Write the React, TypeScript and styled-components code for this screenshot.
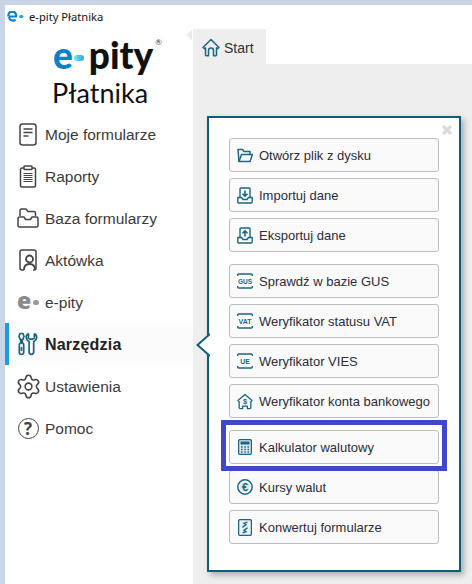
import React from "react";
import styled, { createGlobalStyle } from "styled-components";
import { Settings } from "lucide-react";

const GlobalStyle = createGlobalStyle`
  html, body {
    margin: 0;
    padding: 0;
    background: #c9d5e7;
  }
  * {
    box-sizing: border-box;
  }
`;

const Window = styled.div`
  width: 472px;
  height: 584px;
  padding: 5px 0 0 5px;
  overflow: hidden;
  font-family: "Liberation Sans", Arial, sans-serif;
`;

const Frame = styled.div`
  height: 579px;
  background: #fff;
  display: flex;
  flex-direction: column;
`;

const TitleBar = styled.div`
  height: 24px;
  flex: none;
  display: flex;
  align-items: center;
  gap: 5px;
  padding: 0 0 1px 2px;
  font-family: "Noto Sans", sans-serif;
  font-size: 11.2px;
  color: #111;
`;

const Body = styled.div`
  flex: 1;
  display: flex;
  min-height: 0;
`;

const Sidebar = styled.aside`
  width: 188px;
  flex: none;
  position: relative;
  display: flex;
  flex-direction: column;
`;

const CollapseMark = styled.div`
  position: absolute;
  right: 1px;
  top: 1px;
  width: 0;
  height: 0;
  border-top: 5px solid transparent;
  border-bottom: 5px solid transparent;
  border-right: 6px solid #eaeaea;
`;

const Logo = styled.div`
  height: 84px;
  display: flex;
  flex-direction: column;
  color: #111;
  font-family: Lato, sans-serif;
`;

const LogoTop = styled.div`
  height: 49px;
  display: flex;
  align-items: flex-start;
  padding: 6px 0 0 48px;
  font-size: 37px;
  font-weight: 900;
  line-height: 40px;
`;

const LogoE = styled.span`
  color: #0b82c4;
`;

const LogoDot = styled.span`
  width: 10px;
  height: 6px;
  margin: 20px 5px 0 1px;
  border-radius: 3px;
  background: linear-gradient(90deg, #8fdcf0, #2aa8dc);
`;

const LogoReg = styled.span`
  font-size: 8px;
  line-height: 10px;
  font-weight: 400;
  margin: 2px 0 0 2px;
  color: #333;
`;

const LogoName = styled.div`
  font-size: 27px;
  line-height: 30px;
  font-weight: 400;
  padding-left: 47px;
`;

const Nav = styled.nav`
  display: flex;
  flex-direction: column;
`;

const NavItem = styled.div<{ $active?: boolean }>`
  height: 42px;
  display: flex;
  align-items: center;
  padding-left: ${(p) => (p.$active ? "8px" : "12px")};
  border-left: ${(p) => (p.$active ? "4px solid #16a2d8" : "none")};
  background: ${(p) => (p.$active ? "#fbfbfb" : "transparent")};
  font-size: ${(p) => (p.$active ? "16px" : "15.5px")};
  letter-spacing: ${(p) => (p.$active ? "0.2px" : "0")};
  font-weight: ${(p) => (p.$active ? 700 : 400)};
  color: ${(p) => (p.$active ? "#222" : "#3a3a3a")};
`;

const NavIcon = styled.span`
  width: 22px;
  height: 24px;
  flex: none;
  margin-right: 6px;
  display: flex;
  align-items: center;
  justify-content: center;

  svg {
    flex: none;
  }
`;

const NavLabel = styled.span`
  margin-top: 1px;
`;

const GreyE = styled.span`
  font-family: "Open Sans", sans-serif;
  font-weight: 800;
  font-size: 23px;
  line-height: 22px;
  margin-top: -5px;
  color: #8a8a8a;
  display: flex;
  align-items: center;
  width: 100%;
`;

const GreyDot = styled.span`
  width: 7px;
  height: 5px;
  margin: 5px 0 0 2px;
  border-radius: 3px;
  background: #9a9a9a;
`;

const Main = styled.main`
  flex: 1;
  position: relative;
  display: flex;
  flex-direction: column;
`;

const Tabs = styled.div`
  height: 35px;
  flex: none;
  display: flex;
`;

const Tab = styled.div`
  width: 73px;
  background: #eeeeee;
  display: flex;
  align-items: center;
  gap: 4px;
  padding: 2px 0 0 9px;
  font-size: 14px;
  color: #333;
`;

const Content = styled.div`
  flex: 1;
  background: #eeeeee;
`;

const Popover = styled.div`
  position: absolute;
  left: 14px;
  top: 87px;
  width: 254px;
  height: 456px;
  background: #fff;
  border: 2px solid #0f5d7a;
  box-shadow: 3px 3px 6px rgba(0, 0, 0, 0.28);
  padding: 20px 20px 0 20px;
  display: flex;
  flex-direction: column;
`;

const Arrow = styled.svg`
  position: absolute;
  left: -13px;
  top: 215px;
`;

const CloseMark = styled.svg`
  position: absolute;
  right: 6px;
  top: 6px;
`;

const Group = styled.div`
  display: flex;
  flex-direction: column;
  gap: 6px;
  margin-bottom: 12px;
`;

const ActionButton = styled.div`
  height: 34px;
  width: 210px;
  display: flex;
  align-items: center;
  padding-left: 7px;
  gap: 6px;
  background: #fafafa;
  border: 1px solid #bdbdbd;
  border-radius: 3px;
  font-size: 13px;
  color: #2c2c3a;
  white-space: nowrap;
`;

const ButtonIcon = styled.span`
  width: 16px;
  height: 18px;
  flex: none;
  display: flex;
  align-items: center;
  justify-content: center;
`;

const Highlight = styled.div`
  position: absolute;
  left: 12px;
  top: 302px;
  width: 226px;
  height: 51px;
  border: 5px solid #3f48cc;
  pointer-events: none;
`;

const TEAL = "#1b6682";
const GREY = "#444";

const AppLogoIcon = () => (
  <svg width="17" height="12" viewBox="0 0 17 12">
    <path d="M1.5 5.5 A3.9 3.9 0 1 1 9 5.5 L2 5.5 M2 6 A3.9 3.9 0 0 0 8.5 8.6" fill="none" stroke="#0b82c4" strokeWidth="2.2" />
    <rect x="12" y="4" width="4.5" height="3" rx="1.5" fill="#2aa8dc" />
  </svg>
);

const FormsIcon = () => (
  <svg width="18" height="23" viewBox="0 0 18 23" fill="none" stroke={GREY} strokeWidth="1.5">
    <rect x="1" y="1" width="16" height="21" rx="2.5" />
    <path d="M4.5 6h9M4.5 9.500h9M4.500 13h5" />
  </svg>
);

const ClipboardIcon = () => (
  <svg width="18" height="23" viewBox="0 0 18 23" fill="none" stroke={GREY} strokeWidth="1.5">
    <path d="M5 3H3a1.500 1.500 0 0 0-1.500 1.500v16A1.500 1.500 0 0 0 3 22h12a1.500 1.500 0 0 0 1.500-1.500v-16A1.500 1.500 0 0 0 15 3h-2" />
    <rect x="5" y="1" width="8" height="3.500" rx="0.800" />
    <path d="M4.500 8.500h9M4.500 10.500h9M4.500 12.500h9M4.500 14.500h9M4.500 16.500h9" strokeWidth="1.100" />
  </svg>
);

const FolderIcon = () => (
  <svg width="22" height="22" viewBox="0 0 22 22" fill="none" stroke={GREY} strokeWidth="1.5">
    <path d="M3 9V3.500A1.500 1.500 0 0 1 4.500 2H9l2 2.500h6A1.500 1.500 0 0 1 18.500 6v3" />
    <path d="M1 11.500A1.500 1.500 0 0 1 2.500 10H7l1.500 2.500h5L15 10h4.500A1.500 1.500 0 0 1 21 11.500v7a1.500 1.500 0 0 1-1.500 1.500h-17A1.500 1.500 0 0 1 1 18.500z" />
  </svg>
);

const ContactIcon = () => (
  <svg width="18" height="22" viewBox="0 0 18 22" fill="none" stroke={GREY} strokeWidth="1.500">
    <path d="M5 21H3a2 2 0 0 1-2-2V3a2 2 0 0 1 2-2h12a2 2 0 0 1 2 2v16a2 2 0 0 1-2 2h-1" />
    <circle cx="10.500" cy="10" r="3.500" strokeWidth="1.800" />
    <path d="M5 21c0-4 2-6 5.500-6s5.500 2 5.500 6" strokeWidth="1.800" />
  </svg>
);

const ToolsIcon = () => (
  <svg width="22" height="24" viewBox="0 0 22 24" fill="none" stroke={TEAL} strokeWidth="1.700" strokeLinejoin="round">
    <path d="M3 1.500h3L7 4.500 5.800 7.500H3.200L2 4.500z" />
    <path d="M3.700 7.500v3.500M5.300 7.500v3.500" />
    <rect x="2.300" y="11" width="4.400" height="11.500" rx="2.200" />
    <path d="M4.500 15v4" />
    <path d="M12 1.800c-2 1-2.600 3.200-2 5 .5 1.500 1.500 2.300 2.600 2.700v10.500a2.300 2.300 0 0 0 4.600 0V9.500c1.200-.5 2.200-1.300 2.700-2.700.6-1.800 0-4-2-5v4.200l-2 1.200h-2l-2-1.200z" transform="translate(-.5 0)" />
  </svg>
);

const HelpWrap = styled.span`
  width: 21px;
  height: 21px;
  flex: none;
  border: 1.600px solid ${GREY};
  border-radius: 50%;
  display: flex;
  align-items: center;
  justify-content: center;
  font-size: 17px;
  font-weight: 700;
  font-family: "Open Sans", sans-serif;
  color: ${GREY};
`;

const HomeIcon = () => (
  <svg width="18" height="19" viewBox="0 0 18 19" fill="none" stroke={TEAL} strokeWidth="1.500" strokeLinejoin="round" strokeLinecap="round">
    <path d="M1 9.500 9 1.500l8 8-1.500 1.200-1-.8v7.100a.8.8 0 0 1-.8.800h-2.200V12.500a2.500 2.500 0 0 0-5 0v5.300H4.300a.8.8 0 0 1-.8-.8V9.900l-1 .8z" />
  </svg>
);

const OpenFolderIcon = () => (
  <svg width="16" height="15" viewBox="0 0 16 15" fill="none" stroke={TEAL} strokeWidth="1.500" strokeLinejoin="round">
    <path d="M2 13.500 1 1.500h4.500L7 3.500h6v3" />
    <path d="M2 13.500 4.500 6.500H15.500l-2.500 7z" />
  </svg>
);

const TrayIcon = ({ up }: { up?: boolean }) => (
  <svg width="16" height="17" viewBox="0 0 16 17" fill="none" stroke={TEAL} strokeWidth="1.400" strokeLinejoin="round">
    <path d="M3 10V2a1 1 0 0 1 1-1h8a1 1 0 0 1 1 1v8" />
    <path d="M.8 10.500h3.700L6 12.500h4l1.500-2h3.700v4.500a1 1 0 0 1-1 1H1.800a1 1 0 0 1-1-1z" />
    <path d={up ? "M8 9.500V4M5.500 6.300 8 3.800l2.500 2.500" : "M8 3.500V9M5.500 6.800 8 9.300l2.500-2.500"} strokeWidth="1.600" />
  </svg>
);

const TagIcon = ({ label, size }: { label: string; size: number }) => (
  <svg width="16" height="16" viewBox="0 0 16 16" fill="none">
    <path d="M.700 3V2a1 1 0 0 1 1-1h12.600a1 1 0 0 1 1 1v1M.700 13v1a1 1 0 0 0 1 1h12.600a1 1 0 0 0 1-1v-1" stroke={TEAL} strokeWidth="1.400" />
    <text x="8" y="10.900" textAnchor="middle" fontFamily="Liberation Sans, sans-serif" fontSize={size} fontWeight="700" fill={TEAL}>
      {label}
    </text>
  </svg>
);

const BankIcon = () => (
  <svg width="17" height="17" viewBox="0 0 17 17" fill="none" stroke={TEAL} strokeWidth="1.400" strokeLinejoin="round">
    <path d="M1 7.500 8.500 1 16 7.500l-1.300 1.300V15a1 1 0 0 1-1 1H11v-2.500H6V16H3.300a1 1 0 0 1-1-1V8.800z" />
    <text x="8.500" y="11.500" textAnchor="middle" fontFamily="Liberation Sans, sans-serif" fontSize="8" fontWeight="700" fill={TEAL} stroke="none">
      $
    </text>
  </svg>
);

const CalcIcon = () => (
  <svg width="14" height="16" viewBox="0 0 14 16" fill="none">
    <rect x=".6" y=".6" width="12.800" height="14.800" rx="1.500" fill="#d8e8ee" stroke={TEAL} strokeWidth="1.300" />
    <rect x="2.500" y="2.500" width="9" height="3" fill={TEAL} />
    <path d="M3 8h1.500M6.300 8h1.500M9.500 8H11M3 10.500h1.500M6.300 10.500h1.500M9.500 10.500H11M3 13h1.500M6.300 13h1.500M9.500 13H11" stroke={TEAL} strokeWidth="1.300" />
  </svg>
);

const EuroIcon = () => (
  <svg width="16" height="16" viewBox="0 0 16 16" fill="none">
    <circle cx="8" cy="8" r="7.200" stroke={TEAL} strokeWidth="1.500" />
    <circle cx="8" cy="8" r="5" fill="#d8e8ee" />
    <text x="8" y="11.800" textAnchor="middle" fontFamily="Liberation Sans, sans-serif" fontSize="11" fontWeight="700" fill={TEAL}>
      €
    </text>
  </svg>
);

const ConvertIcon = () => (
  <svg width="14" height="17" viewBox="0 0 14 17" fill="none" stroke={TEAL} strokeWidth="1.300">
    <rect x=".6" y=".6" width="12.800" height="15.800" rx="1.500" fill="#eaf2f5" />
    <path d="M9.500 3.200 6 4.300 8 5.700C7 6.700 5.500 6.800 4.500 8.500M4.500 13.800l3.500-1.100-2-1.400c1-1 2.500-1.100 3.500-2.800" strokeWidth="1.400" />
  </svg>
);

const navItems = [
  { label: "Moje formularze", icon: <FormsIcon /> },
  { label: "Raporty", icon: <ClipboardIcon /> },
  { label: "Baza formularzy", icon: <FolderIcon /> },
  { label: "Aktówka", icon: <ContactIcon /> },
  {
    label: "e-pity",
    icon: (
      <GreyE>
        e<GreyDot />
      </GreyE>
    ),
  },
  { label: "Narzędzia", icon: <ToolsIcon />, active: true },
  { label: "Ustawienia", icon: <Settings size={27} color={GREY} strokeWidth={1.4} /> },
  { label: "Pomoc", icon: <HelpWrap>?</HelpWrap> },
];

const groups = [
  [
    { label: "Otwórz plik z dysku", icon: <OpenFolderIcon /> },
    { label: "Importuj dane", icon: <TrayIcon /> },
    { label: "Eksportuj dane", icon: <TrayIcon up /> },
  ],
  [
    { label: "Sprawdź w bazie GUS", icon: <TagIcon label="GUS" size={6.500} /> },
    { label: "Weryfikator statusu VAT", icon: <TagIcon label="VAT" size={7} /> },
    { label: "Weryfikator VIES", icon: <TagIcon label="UE" size={7} /> },
    { label: "Weryfikator konta bankowego", icon: <BankIcon /> },
  ],
  [
    { label: "Kalkulator walutowy", icon: <CalcIcon /> },
    { label: "Kursy walut", icon: <EuroIcon /> },
    { label: "Konwertuj formularze", icon: <ConvertIcon /> },
  ],
];

export default function App() {
  return (
    <Window>
      <GlobalStyle />
      <Frame>
        <TitleBar>
          <AppLogoIcon />
          e-pity Płatnika
        </TitleBar>
        <Body>
          <Sidebar>
            <CollapseMark />
            <Logo>
              <LogoTop>
                <LogoE>e</LogoE>
                <LogoDot />
                pity
                <LogoReg>®</LogoReg>
              </LogoTop>
              <LogoName>Płatnika</LogoName>
            </Logo>
            <Nav>
              {navItems.map((item) => (
                <NavItem key={item.label} $active={item.active}>
                  <NavIcon>{item.icon}</NavIcon>
                  <NavLabel>{item.label}</NavLabel>
                </NavItem>
              ))}
            </Nav>
          </Sidebar>
          <Main>
            <Tabs>
              <Tab>
                <HomeIcon />
                Start
              </Tab>
            </Tabs>
            <Content />
            <Popover>
              <Arrow width="14" height="24" viewBox="0 0 14 24">
                <path d="M14 1 1.500 12 14 23z" fill="#fff" />
                <path d="M14 1 1.500 12 14 23" fill="none" stroke="#0f5d7a" strokeWidth="2" />
              </Arrow>
              <CloseMark width="12" height="12" viewBox="0 0 12 12">
                <path d="M2 2l8 8M10 2l-8 8" stroke="#dcdcdc" strokeWidth="3.400" />
              </CloseMark>
              {groups.map((group, i) => (
                <Group key={i}>
                  {group.map((b) => (
                    <ActionButton key={b.label}>
                      <ButtonIcon>{b.icon}</ButtonIcon>
                      {b.label}
                    </ActionButton>
                  ))}
                </Group>
              ))}
              <Highlight />
            </Popover>
          </Main>
        </Body>
      </Frame>
    </Window>
  );
}
